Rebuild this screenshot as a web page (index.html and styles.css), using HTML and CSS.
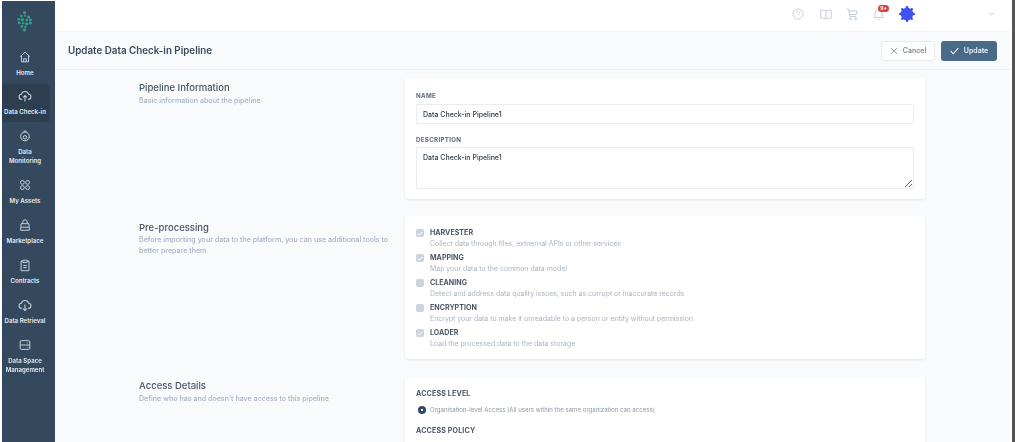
FILE: index.html
```html
<!DOCTYPE html>
<html lang="en">
<head>
<meta charset="utf-8">
<title>Update Data Check-in Pipeline</title>
<link rel="stylesheet" href="styles.css">
</head>
<body>
<div class="app">
  <nav class="sidebar">
    <svg class="logo" width="16" height="22" viewBox="0 0 18 24" fill="#2f9e86">
      <circle cx="8.500" cy="2.500" r="1.800"/><circle cx="5" cy="6.500" r="1.500"/><circle cx="9" cy="6" r="1.200"/><circle cx="13" cy="7.500" r="1.800"/>
      <circle cx="2" cy="10" r="1.500"/><circle cx="6" cy="10.500" r="1.800"/><circle cx="11" cy="11" r="1.500"/><circle cx="15" cy="11" r="1.700"/>
      <circle cx="2.500" cy="14" r="1.700"/><circle cx="7" cy="14.500" r="1.500"/><circle cx="11" cy="15" r="1.700"/><circle cx="15" cy="14.500" r="1.600"/>
      <circle cx="5.500" cy="18" r="1.500"/><circle cx="9.500" cy="18.500" r="1.400"/><circle cx="8.500" cy="22" r="1.900"/>
    </svg>
    <a class="nav-item item-home">
      <svg width="14" height="14" viewBox="-1 -1 16 16"><path d="M1.500 6.500 7 1.500l5.500 5M3 5.500v7h8v-7M5.500 12.500V9h3v3.500"/></svg>
      <span>Home</span>
    </a>
    <a class="nav-item active">
      <svg width="14" height="14" viewBox="-.5 -.5 15 15"><path d="M4 10.500H3.500a2.700 2.700 0 0 1-.3-5.400 3.900 3.900 0 0 1 7.600 0 2.700 2.700 0 0 1-.3 5.400H10M7 13V6.500M5 8.500l2-2 2 2"/></svg>
      <span>Data Check-in</span>
    </a>
    <a class="nav-item">
      <svg width="14" height="14" viewBox="-1 -1 16 16"><circle cx="7" cy="7.500" r="5"/><circle cx="7" cy="8.500" r="2"/><path d="M5 2.500 7 1l2 1.500"/></svg>
      <span>Data<br>Monitoring</span>
    </a>
    <a class="nav-item">
      <svg width="14" height="14" viewBox="-1 -1 16 16"><circle cx="4" cy="4" r="2.200"/><circle cx="10" cy="4" r="2.200"/><circle cx="4" cy="10" r="2.200"/><circle cx="10" cy="10" r="2.200"/></svg>
      <span>My Assets</span>
    </a>
    <a class="nav-item">
      <svg width="14" height="14" viewBox="-1 -1 16 16"><path d="M2.500 5.500h9l.5 7.500H2zM4.500 5.500V3.500a2.500 2.500 0 0 1 5 0v2M2.500 9.500h9"/></svg>
      <span>Marketplace</span>
    </a>
    <a class="nav-item">
      <svg width="14" height="14" viewBox="-1 -1 16 16"><path d="M4.500 2.500h-2v11h9v-11h-2M4.500 1.500h5v2.500h-5zM5 7.500h4M5 10h4"/></svg>
      <span>Contracts</span>
    </a>
    <a class="nav-item">
      <svg width="14" height="14" viewBox="-.5 -.5 15 15"><path d="M4 10.500H3.500a2.700 2.700 0 0 1-.3-5.400 3.900 3.900 0 0 1 7.600 0 2.700 2.700 0 0 1-.3 5.400H10M7 6.500V13M5 11l2 2 2-2"/></svg>
      <span>Data Retrieval</span>
    </a>
    <a class="nav-item">
      <svg width="14" height="14" viewBox="-1 -1 16 16"><rect x="1.500" y="2" width="11" height="10" rx="1.500"/><path d="M1.500 7h11M9.800 4.500h.8M9.800 9.500h.8"/></svg>
      <span>Data Space<br>Management</span>
    </a>
  </nav>
  <div class="main">
    <header class="topbar">
      <svg class="top-icon icon-help" width="12" height="12" viewBox="0 0 13 13"><circle cx="6.500" cy="6.500" r="5.500"/><path d="M5 5a1.600 1.600 0 1 1 2.400 1.400c-.6.400-.9.700-.9 1.400M6.500 9.500v.3"/></svg>
      <svg class="top-icon icon-book" width="12" height="11" viewBox="0 0 12 11"><path d="M6 2.200C5 1.300 3 1 .8 1.200v8C3 9 5 9.300 6 10c1-.7 3-1 5.200-.8v-8C9 1 7 1.300 6 2.200zM6 2.200V10"/></svg>
      <svg class="top-icon" width="12" height="13" viewBox="0 0 12 13"><path d="M.5 1h2l1.500 7.500h6.500M3 3h8l-.8 3.500H3.600"/><circle cx="4.500" cy="11" r="1"/><circle cx="9.500" cy="11" r="1"/></svg>
      <span class="bell">
        <svg class="top-icon" width="11" height="13" viewBox="0 0 11 13"><path d="M1 9.500c1-1 1-2 1-4a3.500 3.500 0 0 1 7 0c0 2 0 3 1 4zM4.500 11.500h2"/></svg>
        <span class="badge">9+</span>
      </span>
      <svg class="gear" width="16" height="16" viewBox="0 0 16 16"><circle cx="8" cy="8" r="6.300" fill="#3f51f0"/><g fill="#3f51f0"><circle cx="8" cy="1.300" r="1.300"/><circle cx="8" cy="14.700" r="1.300"/><circle cx="1.300" cy="8" r="1.300"/><circle cx="14.700" cy="8" r="1.300"/><circle cx="3.300" cy="3.300" r="1.300"/><circle cx="12.700" cy="3.300" r="1.300"/><circle cx="3.300" cy="12.700" r="1.300"/><circle cx="12.700" cy="12.700" r="1.300"/></g></svg>
      <svg class="chevron" width="5" height="4" viewBox="0 0 6 4"><path d="M.5 .8 3 3l2.500-2.200"/></svg>
    </header>
    <div class="page-head">
      <h1>Update Data Check-in Pipeline</h1>
      <div class="actions">
        <button class="btn btn-cancel" type="button">
          <svg width="8" height="8" viewBox="0 0 9 9"><path d="M1 1l7 7M8 1 1 8"/></svg>
          Cancel
        </button>
        <button class="btn btn-update" type="button">
          <svg width="9" height="8" viewBox="0 0 9 8"><path d="M.7 4.200 3.300 6.800 8.300 1"/></svg>
          Update
        </button>
      </div>
    </div>
    <main class="content">
      <section class="row row-info">
        <div class="intro">
          <h2>Pipeline Information</h2>
          <p>Basic information about the pipeline</p>
        </div>
        <div class="card card-info">
          <label class="field-label">NAME</label>
          <input class="input" type="text" spellcheck="false" value="Data Check-in Pipeline1">
          <label class="field-label label-desc">DESCRIPTION</label>
          <textarea class="input textarea" spellcheck="false">Data Check-in Pipeline1</textarea>
        </div>
      </section>
      <section class="row row-pre">
        <div class="intro">
          <h2>Pre-processing</h2>
          <p>Before importing your data to the platform, you can use additional tools to better prepare them</p>
        </div>
        <div class="card card-pre">
          <div class="option">
            <span class="check"><svg viewBox="0 0 7 6"><path d="M.8 3 2.800 5 6.200 1"/></svg></span>
            <div><h3>HARVESTER</h3><p>Collect data through files, extnernal APIs or other services</p></div>
          </div>
          <div class="option">
            <span class="check"><svg viewBox="0 0 7 6"><path d="M.8 3 2.800 5 6.200 1"/></svg></span>
            <div><h3>MAPPING</h3><p>Map your data to the common data model</p></div>
          </div>
          <div class="option">
            <span class="check"></span>
            <div><h3>CLEANING</h3><p>Detect and address data quality issues, such as corrupt or inaccurate records</p></div>
          </div>
          <div class="option">
            <span class="check"></span>
            <div><h3>ENCRYPTION</h3><p>Encrypt your data to make it unreadable to a person or entity without permission</p></div>
          </div>
          <div class="option">
            <span class="check"><svg viewBox="0 0 7 6"><path d="M.8 3 2.800 5 6.200 1"/></svg></span>
            <div><h3>LOADER</h3><p>Load the processed data to the data storage</p></div>
          </div>
        </div>
      </section>
      <section class="row row-access">
        <div class="intro">
          <h2>Access Details</h2>
          <p>Define who has and doesn't have access to this pipeline</p>
        </div>
        <div class="card card-access">
          <h3>ACCESS LEVEL</h3>
          <div class="radio-line">
            <span class="radio"></span>
            <span>Organisation-level Access (All users within the same organization can access)</span>
          </div>
          <h3>ACCESS POLICY</h3>
        </div>
      </section>
    </main>
  </div>
  <div class="edge"></div>
</div>
</body>
</html>
```
FILE: styles.css
```css
* { box-sizing: border-box; }
html, body { height: 100%; margin: 0; overflow: hidden; }
body { background: #fff; font-family: Inter, "Liberation Sans", sans-serif; }
.app { display: flex; height: 442px; width: 1015px; padding-left: 2px; overflow: hidden; filter: blur(.3px); }

.sidebar { width: 53px; flex: none; margin-top: 1px; background: #34495e; display: flex; flex-direction: column; align-items: stretch; }
.logo { margin: 9px 0 18px 15px; flex: none; }
.nav-item { display: flex; flex-direction: column; align-items: center; flex: none; margin-right: 5px; padding-right: 2px; text-align: center; color: #e6ebf1; font-size: 6.100px; font-weight: 600; line-height: 9px; padding-bottom: 13px; white-space: nowrap; }
.nav-item svg { fill: none; stroke: #c9d3dd; stroke-width: 1.100; margin-bottom: 4px; flex: none; }
.item-home { padding-bottom: 12px; }
.nav-item.active { background: #2c3e50; border-radius: 0 4px 4px 0; padding-top: 5px; padding-bottom: 6px; margin-top: -5px; margin-bottom: 7px; }

.main { flex: 1; min-width: 0; display: flex; flex-direction: column; margin-right: 2px; background: #f9fafc; }
.topbar { height: 31px; flex: none; background: #fff; display: flex; align-items: center; justify-content: flex-end; padding: 0 16px 3px 0; }
.top-icon { fill: none; stroke: #c6ced8; stroke-width: 1; flex: none; }
.topbar > .top-icon { margin-right: 15px; }
.topbar > .icon-help { margin-right: 16px; }
.topbar > .icon-book { margin-right: 14px; }
.bell { position: relative; display: flex; margin-right: 15px; }
.badge { position: absolute; left: 5px; top: -3px; width: 11px; height: 7px; border-radius: 4px; background: #d6423c; color: #fff; font-size: 5px; line-height: 7px; font-weight: 700; text-align: center; }
.gear { margin-right: 74px; flex: none; }
.chevron { fill: none; stroke: #a9b3be; stroke-width: 1; flex: none; }

.page-head { height: 39px; flex: none; border-bottom: 1px solid #eceff3; border-top: 1px solid #f3f4f7; display: flex; align-items: center; justify-content: space-between; padding: 0 13px; }
.page-head h1 { margin: 0; font-size: 9.800px; font-weight: 600; color: #3b4a5a; }
.actions { display: flex; gap: 6px; }
.btn { height: 20px; border-radius: 3px; font: 600 7px Inter, "Liberation Sans", sans-serif; display: flex; align-items: center; justify-content: center; gap: 5px; padding: 0; }
.btn-cancel { width: 54px; background: #fff; border: 1px solid #e8ebf0; color: #7b8794; }
.btn-cancel svg { fill: none; stroke: #8d98a5; stroke-width: 1; }
.btn-update { width: 56px; background: #4a6a8a; border: 0; color: #eef2f6; }
.btn-update svg { fill: none; stroke: #fff; stroke-width: 1.100; }

.content { flex: 1; min-height: 0; padding: 8px 0 0 84px; overflow: hidden; }
.row { display: grid; grid-template-columns: 266px 520px; }
.row-info { margin-bottom: 17px; }
.row-pre { margin-bottom: 18px; }
.intro h2 { margin: 3px 0 0; font-size: 9.500px; line-height: 13px; font-weight: 500; color: #465565; }
.intro p { margin: 1px 0 0; font-size: 7.100px; line-height: 11px; font-weight: 500; color: #a7b4c6; }
.row-pre .intro { padding-top: 2px; }
.row-pre .intro p { margin-top: 0; }
.row-access .intro h2 { margin-top: 2px; }
.card { background: #fff; border-radius: 3px; box-shadow: 0 1px 2px rgba(60, 70, 90, .12); padding: 0 11px; }
.card-info { height: 121px; padding-top: 14px; }
.field-label { display: block; font-size: 6.200px; line-height: 8px; font-weight: 700; letter-spacing: .3px; color: #5b6877; margin-bottom: 4px; }
.label-desc { margin-top: 12px; margin-bottom: 3px; }
.input { display: block; width: 100%; height: 20px; border: 1px solid #e9ecf3; border-radius: 2px; background: #fff; padding: 0 6px; font: 500 7px Inter, "Liberation Sans", sans-serif; color: #2f3b48; outline: 0; }
.textarea { height: 42px; padding-top: 5px; line-height: 10px; resize: vertical; }

.card-pre { height: 143px; padding-top: 11px; }
.option { display: flex; gap: 6px; height: 25px; }
.check { width: 8px; height: 8px; border-radius: 2px; background: #cbd3df; margin-top: 2px; display: flex; align-items: center; justify-content: center; flex: none; }
.check svg { fill: none; stroke: #fff; stroke-width: 1.200; width: 6px; height: 5px; }
.option h3, .card-access h3 { margin: 0; font-size: 7.100px; line-height: 11px; font-weight: 700; color: #4a5666; }
.card-access h3 { letter-spacing: .15px; }
.option p { margin: 1px 0 0; font-size: 6.950px; line-height: 9px; font-weight: 400; color: #a9b4c2; white-space: nowrap; }

.card-access { height: 80px; padding-top: 11px; }
.radio-line { display: flex; align-items: center; gap: 4px; height: 11px; margin: 5px 0 10px; font-size: 6.100px; color: #8d98a6; padding-left: 2px; }
.radio { width: 8px; height: 8px; border-radius: 50%; background: radial-gradient(circle, #fff 0 1px, #2f4a66 1.500px); flex: none; }

.edge { width: 3px; flex: none; background: #555; }
```
